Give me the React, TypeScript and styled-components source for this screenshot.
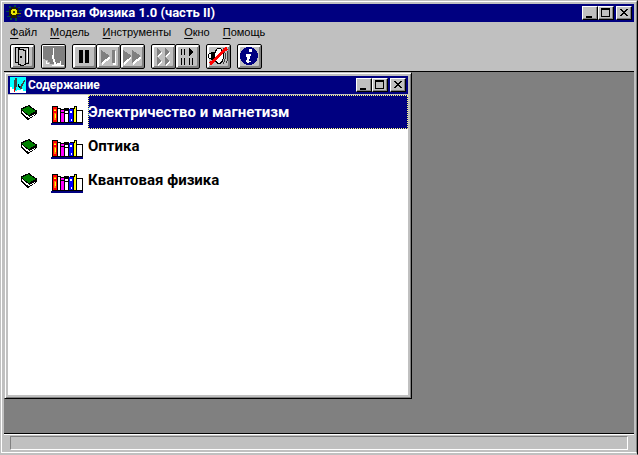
import React from "react";
import styled, { createGlobalStyle } from "styled-components";

const Global = createGlobalStyle`
  * { box-sizing: border-box; }
  html, body, #root { height: 100%; margin: 0; }
  body { background: #c0c0c0; overflow: hidden; font-family: Roboto, "Liberation Sans", sans-serif; color: #000; }
  svg { display: block; flex: none; shape-rendering: crispEdges; }
`;

const Frame = styled.div`
  height: 100vh;
  display: flex;
  border: 1px solid;
  border-color: #c0c0c0 #000 #c0c0c0 #c0c0c0;
  background: #c0c0c0;
  padding-bottom: 1px;
`;
const FrameInner = styled.div`
  flex: 1;
  min-width: 0;
  display: flex;
  flex-direction: column;
  border: 1px solid;
  border-color: #fff #808080 #fff #fff;
  padding: 2px 2px 0;
`;
const TitleBar = styled.header`
  flex: none;
  height: 18px;
  display: flex;
  align-items: center;
  background: #000080;
  color: #fff;
  padding: 0 2px;
`;
const Title = styled.h1<{ $small?: boolean }>`
  flex: 1;
  margin: 0 0 0 2px;
  font-size: ${(p) => (p.$small ? 12 : 13)}px;
  line-height: 16px;
  font-weight: bold;
  white-space: nowrap;
`;
const CaptionButtons = styled.div`
  display: flex;
`;
const CaptionButton = styled.button<{ $gap?: boolean }>`
  width: 16px;
  height: 14px;
  padding: 0;
  margin-left: ${(p) => (p.$gap ? 2 : 0)}px;
  background: #c0c0c0;
  border: 1px solid;
  border-color: #fff #000 #000 #fff;
  box-shadow: inset -1px -1px #808080;
`;
const MenuBar = styled.nav`
  flex: none;
  height: 19px;
  display: flex;
  gap: 13px;
  padding: 0 6px;
`;
const MenuItem = styled.button`
  border: 0;
  padding: 0;
  background: none;
  font: 11px/20px "Liberation Sans", Arial, sans-serif;
  color: #000;
  white-space: nowrap;

  u { text-underline-offset: 2px; }
`;
const ToolBar = styled.div`
  flex: none;
  height: 30px;
  display: flex;
  align-items: center;
  gap: 6px;
  padding: 0 6px;
`;
const ToolGroup = styled.div`
  display: flex;
`;
const ToolButton = styled.button`
  width: 25px;
  height: 25px;
  padding: 0;
  display: grid;
  place-items: center;
  background: #c0c0c0;
  border: 1px solid #000;
  border-radius: 2px;
  box-shadow: inset 1px 1px #fff, inset -1px -1px #808080, inset 2px 2px #fff, inset -2px -2px #808080;
  & + & { margin-left: -1px; }
`;
const Workspace = styled.main`
  flex: 1;
  min-height: 0;
  background: #808080;
  border-top: 1px solid #000;
  border-bottom: 1px solid #000;
`;
const Child = styled.section`
  width: calc(100% - 222px);
  height: calc(100% - 34px);
  display: flex;
  flex-direction: column;
  background: #c0c0c0;
  border: 1px solid;
  border-color: #c0c0c0 #000 #000 #c0c0c0;
  box-shadow: inset 1px 1px #fff, inset -1px -1px #808080;
  padding: 3px;
`;
const List = styled.ul`
  flex: 1;
  margin: 1px 0 0;
  padding: 0;
  list-style: none;
  background: #fff;
`;
const Row = styled.li`
  height: 34px;
  display: flex;
  align-items: flex-start;
`;
const BookCell = styled.span`
  width: 43px;
  padding: 10px 0 0 13px;
`;
const ShelfCell = styled.span`
  padding-top: 11px;
`;
const Topic = styled.button<{ $selected?: boolean }>`
  flex: 1;
  height: 34px;
  margin-left: 5px;
  padding: 0;
  text-align: left;
  font: bold 15px/32px Roboto, "Liberation Sans", sans-serif;
  color: ${(p) => (p.$selected ? "#fff" : "#000")};
  background: ${(p) => (p.$selected ? "#000080" : "transparent")};
  border: 0;
  outline: ${(p) => (p.$selected ? "1px dotted #ffff80" : "none")};
  outline-offset: -1px;
  white-space: nowrap;
`;
const StatusBar = styled.footer`
  flex: none;
  height: 18px;
  border-top: 1px solid #fff;
  padding: 1px 6px 2px;
`;
const StatusPanel = styled.div`
  height: 14px;
  border: 1px solid;
  border-color: #808080 #fff #fff #808080;
`;

const MinGlyph = () => <svg width="14" height="12"><path d="M3 9h6v2H3z" /></svg>;
const MaxGlyph = () => (
  <svg width="14" height="12"><path fillRule="evenodd" d="M2 1h9v9H2zM3 3v6h7V3z" /></svg>
);
const CloseGlyph = () => (
  <svg width="14" height="12">
    <path d="M3 2h2v1h1v1h2V3h1V2h2v1h-1v1H9v1H8v1h1v1h1v1h1v1H9V8H8V7H6v1H5v1H3V8h1V7h1V6h1V5H5V4H4V3H3z" />
  </svg>
);
const Captions = () => (
  <CaptionButtons>
    <CaptionButton aria-label="Свернуть"><MinGlyph /></CaptionButton>
    <CaptionButton aria-label="Развернуть"><MaxGlyph /></CaptionButton>
    <CaptionButton $gap aria-label="Закрыть"><CloseGlyph /></CaptionButton>
  </CaptionButtons>
);

const AppIcon = () => (
  <svg width="16" height="16">
    <path d="M3 1h2v2H3zM8 0h2v3H8zM12 2h2v1h-2zM0 6h3v1H0zM1 11h3v1H1zM4 13h2v2H4zM9 13h2v3H9zM12 11h3v1h-3zM12 5h4v1h-4z" fill="#004848" />
    <path d="M5 2h5v1h2v2h1v5h-2v3H5v-2H3V4h2z" fill="#202000" />
    <path d="M6 4h4v1h1v4h-1v1H6V9H5V5h1z" fill="#e8e800" />
    <path d="M7 6h2v2H7z" fill="#404000" />
    <path d="M11 8h4v1h-4z" fill="#808000" />
  </svg>
);
const ContentsIcon = () => (
  <svg width="16" height="16">
    <path d="M0 0h16v16H0z" fill="#00ffff" />
    <path d="M0 10h2v2h2v2h2v2H0zM5 14h2v-1h4v-1h2v2h3v2H5z" fill="#fff" />
    <path d="M5 1h2v9H6v3H4V3h1zM14 3h1v2h-1v2h-1v2h-1v3h-2V9h1V7h1V6h1V4h1z" fill="#404040" />
    <path d="M4 11h1v4H4z" fill="#e00000" />
    <path d="M8 7h1v2h1v2H9v-1H8z" />
  </svg>
);
const DoorIcon = () => (
  <svg width="21" height="21">
    <path d="M3 1h14v17h-4v-1h3V2H4v14h2v1H3z" />
    <path fillRule="evenodd" d="M6 2h2v1h4v1h2v15h-2v1H8v-1H6zM7 4v14h2v1h3v-1h1V5h-2V4z" />
    <path d="M8 10h2v2H8z" />
    <path d="M15 3h1v13h-1z" fill="#fff" />
  </svg>
);
const ModelIcon = () => (
  <svg width="21" height="21">
    <path d="M0 0h21v21H0z" fill="#808080" />
    <path d="M0 13h2v1h3v2h2v2h4v2h10v1H0z" fill="#c0c0c0" />
    <path d="M10 2h1v11h1v3h1v2h-2v-2h-1v-3H9V9h1zM11 18h3v-1h3v-2h1v4h3v1H9v-1h2zM3 15h1v2h2v1H3z" fill="#fff" />
  </svg>
);
const PauseIcon = () => <svg width="19" height="19"><path d="M4 3h4v13H4zM10 3h4v13h-4z" /></svg>;
const StepIcon = () => (
  <svg width="19" height="19">
    <path d="M3 4l9 7-9 7zM14 4h3v14h-3z" fill="#fff" />
    <path d="M2 3l9 6-9 7zM13 3h3v13h-3z" fill="#808080" />
  </svg>
);
const FastIcon = () => (
  <svg width="21" height="19">
    <path d="M2 4l8 7-8 7zM11 4l9 7-9 7z" fill="#fff" />
    <path d="M1 3l9 6-9 7zM10 3l9 6-9 7z" fill="#808080" />
  </svg>
);
const QuadIcon = () => (
  <svg width="19" height="19">
    <path d="M4 2l5 4-5 4zM12 2l5 4-5 4zM4 11l5 4-5 4zM12 11l5 4-5 4z" fill="#fff" />
    <path d="M3 1l5 4-5 4zM11 1l5 4-5 4zM3 10l5 4-5 4zM11 10l5 4-5 4z" fill="#808080" />
  </svg>
);
const ModesIcon = () => (
  <svg width="19" height="19">
    <path d="M3 2h1v6H3zM6 2h1v6H6zM11 1h1v1h1v1h1v1h1v2h-1v1h-1v1h-1v1h-1zM3 11h1v7H3zM6 11h1v7H6zM11 11h1v7h-1zM14 11h1v7h-1z" />
  </svg>
);
const SoundIcon = () => (
  <svg width="21" height="21">
    <path d="M0 8h1V7h2V6h4v1h1v6H7v1H3v-1H1v-1H0z" />
    <ellipse cx="11" cy="10" rx="5" ry="8" />
    <ellipse cx="11" cy="10" rx="4" ry="7" fill="#fff" />
    <path d="M1 8h2v4H1z" fill="#fff" />
    <path d="M15 2q5 8 0 16M18 3q4 7 0 14" fill="none" stroke="#404040" />
    <path d="M2 18L19 2" stroke="#f00" strokeWidth="3" />
  </svg>
);
const InfoIcon = () => (
  <svg width="21" height="21">
    <circle cx="10" cy="10" r="9" fill="#000080" />
    <path d="M10 3h3v3h-3zM7 8h5v2h-1v3h-1v2h2v1h-2v1H8v-1H7v-2h1v-3H7z" fill="#fff" />
  </svg>
);
const BookIcon = () => (
  <svg width="16" height="15">
    <path d="M0 3h2V2h2V1h3V0h2v1h1v1h1v1h2v1h1v1h2v4h-1v1h-1v1h-2v1h-1v1h-2v1H8v1H6v-1H5v-1H4v-1H3v-1H2v-1H1V9H0z" />
    <path d="M1 4h2V3h2V2h2V1h1v1h1v1h2v1h1v1h2v2h-2v1h-2v1H9v1H7V9H6V8H4V7H3V6H2V5H1z" fill="#008000" />
    <path d="M1 6h1v1h1v1h1v1h1v1h2v1h1v1h1v-1h2v-1h2V9h1v1h-1v1h-2v1H9v1H7v-1H5v-1H4v-1H3V9H2V8H1z" fill="#fff" />
  </svg>
);
const ShelfIcon = () => (
  <svg width="32" height="19">
    <path d="M1 0h6v2h3v1h3V2h5v1h1V2h4V0h3v4h6v13H1z" />
    <path d="M2 1h4v15H2z" fill="#f00" />
    <path d="M3 3h2v2H3zM3 7h2v7H3z" fill="#ff8000" />
    <path d="M3 4h2v1H3zM4 8h1v4H4z" fill="#ffff00" />
    <path d="M7 3h2v13H7zM14 5h3v2h-3zM14 8h3v8h-3zM26 5h5v11h-5z" fill="#fff" />
    <path d="M10 4h3v2h-3zM10 7h3v9h-3z" fill="#f0f" />
    <path d="M18 3h4v13h-4z" fill="#00f" />
    <path d="M19 5h2v2h-2zM20 13h1v2h-1z" fill="#fff" />
    <path d="M23 3h2v13h-2zM24 1h1v2h-1z" fill="#ff0" />
    <path d="M0 17h32v2H0z" fill="#000080" />
  </svg>
);

const menus = ["Файл", "Модель", "Инструменты", "Окно", "Помощь"];
const topics = ["Электричество и магнетизм", "Оптика", "Квантовая физика"];
const tools: { label: string; Icon: React.FC }[][] = [
  [{ label: "Выход", Icon: DoorIcon }],
  [{ label: "Модель", Icon: ModelIcon }],
  [
    { label: "Пауза", Icon: PauseIcon },
    { label: "Шаг", Icon: StepIcon },
    { label: "Быстро", Icon: FastIcon },
  ],
  [
    { label: "Запустить все", Icon: QuadIcon },
    { label: "Режимы", Icon: ModesIcon },
  ],
  [{ label: "Звук", Icon: SoundIcon }],
  [{ label: "Справка", Icon: InfoIcon }],
];

export default function App() {
  return (
    <Frame>
      <Global />
      <FrameInner>
        <TitleBar>
          <AppIcon />
          <Title>Открытая Физика 1.0 (часть II)</Title>
          <Captions />
        </TitleBar>
        <MenuBar>
          {menus.map((m) => (
            <MenuItem key={m}><u>{m[0]}</u>{m.slice(1)}</MenuItem>
          ))}
        </MenuBar>
        <ToolBar>
          {tools.map((group, i) => (
            <ToolGroup key={i}>
              {group.map(({ label, Icon }) => (
                <ToolButton key={label} aria-label={label}><Icon /></ToolButton>
              ))}
            </ToolGroup>
          ))}
        </ToolBar>
        <Workspace>
          <Child>
            <TitleBar>
              <ContentsIcon />
              <Title as="h2" $small>Содержание</Title>
              <Captions />
            </TitleBar>
            <List>
              {topics.map((t, i) => (
                <Row key={t}>
                  <BookCell><BookIcon /></BookCell>
                  <ShelfCell><ShelfIcon /></ShelfCell>
                  <Topic $selected={i === 0}>{t}</Topic>
                </Row>
              ))}
            </List>
          </Child>
        </Workspace>
        <StatusBar><StatusPanel /></StatusBar>
      </FrameInner>
    </Frame>
  );
}
